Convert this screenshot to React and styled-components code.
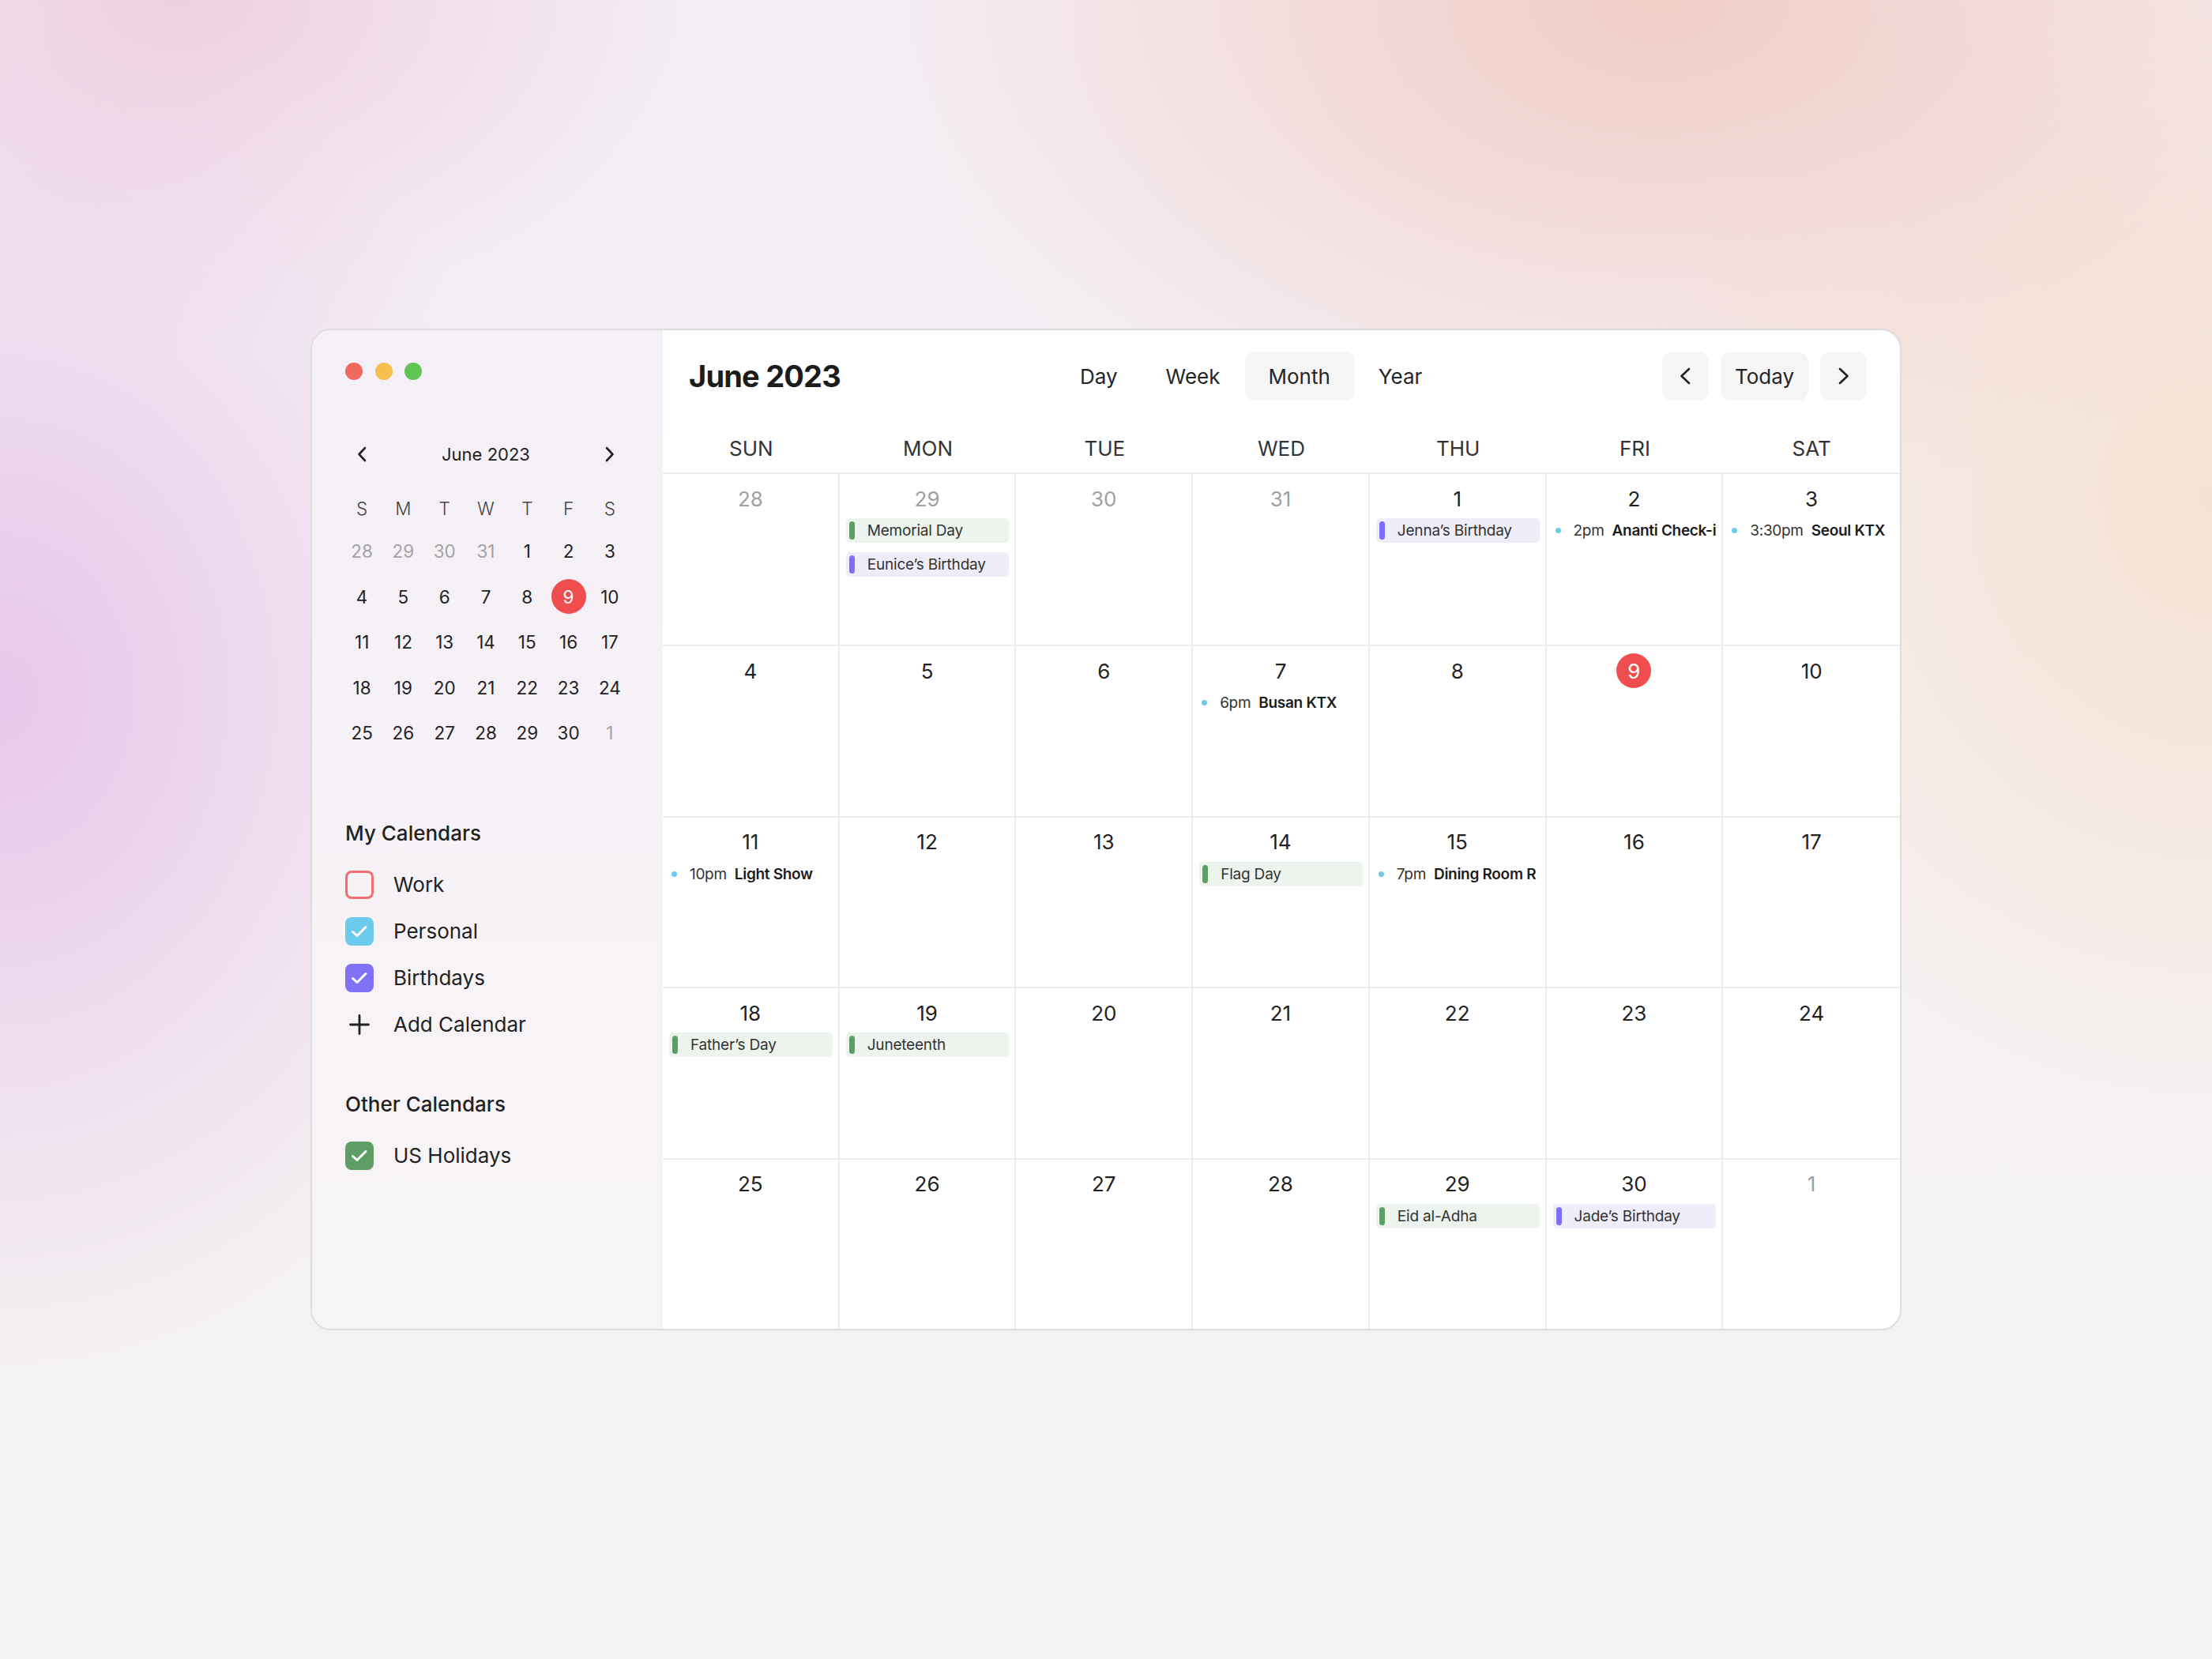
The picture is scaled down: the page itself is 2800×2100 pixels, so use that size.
import React from 'react'
import styled, { createGlobalStyle, css } from 'styled-components'

const GlobalStyle = createGlobalStyle`
  html, body {
    margin: 0;
    padding: 0;
  }
  body {
    font-family: Inter, "Noto Sans", sans-serif;
    color: #222;
    -webkit-font-smoothing: antialiased;
  }
`

const COLORS = {
  line: '#ececec',
  today: '#f04e4e',
  dot: '#6ccbea',
  holiday: { bar: '#5e9e66', bg: '#edf4ee' },
  birthday: { bar: '#7f6ff6', bg: '#efedfa' },
}

// soft pastel backdrop behind the window
const Page = styled.div`
  width: 2800px;
  height: 2100px;
  display: flex;
  align-items: center;
  justify-content: center;
  background:
    radial-gradient(ellipse 1000px 1200px at 0% 42%, rgba(230, 196, 233, 0.95), rgba(230, 196, 233, 0) 72%),
    radial-gradient(ellipse 900px 600px at 8% 0%, rgba(238, 204, 222, 0.9), rgba(238, 204, 222, 0) 75%),
    radial-gradient(ellipse 1400px 900px at 75% 0%, rgba(241, 203, 195, 0.95), rgba(241, 203, 195, 0) 72%),
    radial-gradient(ellipse 1000px 1100px at 100% 30%, rgba(245, 224, 206, 0.95), rgba(245, 224, 206, 0) 72%),
    linear-gradient(180deg, #f4eef5 0%, #f5f1f2 55%, #f4f2f1 100%);
`

const Window = styled.div`
  width: 2014px;
  height: 1268px;
  box-sizing: border-box;
  border: 2px solid #dfdcde;
  border-radius: 26px;
  overflow: hidden;
  display: grid;
  grid-template-columns: 444px 1fr;
  background: #fff;
`

/* ---------- sidebar ---------- */

const Sidebar = styled.aside`
  background: linear-gradient(180deg, #f5eff7 0%, #f6f2f6 55%, #f7f4f5 100%);
  padding: 41px 0 0 42px;
  display: flex;
  flex-direction: column;
`

const TrafficLights = styled.div`
  display: flex;
  gap: 15.5px;
`

const Light = styled.span`
  width: 22px;
  height: 22px;
  border-radius: 50%;
  background: ${p => p.color};
`

const MiniCal = styled.div`
  margin: 72px 0 0 -5px;
  width: 366px;
`

const MiniHeader = styled.div`
  height: 44px;
  display: flex;
  align-items: center;
  justify-content: space-between;
`

const IconButton = styled.span`
  width: 52px;
  height: 44px;
  display: flex;
  align-items: center;
  justify-content: center;
`

const MiniTitle = styled.span`
  font-size: 22px;
  color: #222;
`

const MiniGrid = styled.div`
  margin-top: 20px;
  display: grid;
  grid-template-columns: repeat(7, 1fr);
  grid-template-rows: 52px repeat(5, 57.5px);
`

const MiniCell = styled.span`
  display: flex;
  align-items: center;
  justify-content: center;
  font-size: 22.5px;
  color: ${p => (p.muted ? '#a3a3a3' : p.head ? '#444' : '#222')};
  font-weight: ${p => (p.head ? 300 : 400)};
`

const TodayDot = styled.span`
  width: 44px;
  height: 44px;
  border-radius: 50%;
  background: ${COLORS.today};
  color: #fff;
  display: flex;
  align-items: center;
  justify-content: center;
`

const SectionTitle = styled.div`
  height: 36px;
  line-height: 36px;
  font-size: 26px;
  font-weight: 500;
  color: #222;
  margin-top: ${p => p.mt || '0px'};
  margin-bottom: 24px;
`

const CalList = styled.div`
  display: flex;
  flex-direction: column;
  gap: 13px;
`

const CalRow = styled.div`
  height: 46px;
  display: flex;
  align-items: center;
  gap: 25px;
  font-size: 26px;
  color: #222;
`

const Check = styled.span`
  width: 36px;
  height: 36px;
  box-sizing: border-box;
  border-radius: 8px;
  display: flex;
  align-items: center;
  justify-content: center;
  ${p =>
    p.checked
      ? css`
          background: ${p.color};
        `
      : css`
          border: 3px solid ${p.color};
        `}
`

const PlusSlot = styled.span`
  width: 36px;
  height: 36px;
  display: flex;
  align-items: center;
  justify-content: center;
`

/* ---------- main ---------- */

const Main = styled.section`
  display: flex;
  flex-direction: column;
  min-width: 0;
`

const Header = styled.header`
  padding: 27px 42px 0 33px;
  display: grid;
  grid-template-columns: 465px auto 1fr;
  align-items: center;
  height: 62px;
`

const Title = styled.h1`
  margin: 0;
  font-size: 38px;
  font-weight: 700;
  letter-spacing: -0.8px;
  color: #1c1c1c;
`

const Tabs = styled.nav`
  display: flex;
  gap: 1px;
`

const Tab = styled.span`
  height: 62px;
  padding: 0 30px;
  display: flex;
  align-items: center;
  font-size: 26px;
  color: #252525;
  border-radius: 12px;
  background: ${p => (p.active ? '#f5f5f5' : 'transparent')};
`

const Nav = styled.div`
  justify-self: end;
  display: flex;
  gap: 15px;
`

const NavButton = styled.span`
  height: 61px;
  min-width: 59px;
  box-sizing: border-box;
  padding: 0 ${p => (p.text ? '18px' : '0')};
  display: flex;
  align-items: center;
  justify-content: center;
  border-radius: 12px;
  background: #f5f5f5;
  font-size: 26px;
  color: #252525;
`

const DayNames = styled.div`
  height: 93px;
  box-sizing: border-box;
  display: grid;
  grid-template-columns: repeat(7, 1fr);
  align-items: end;
  padding-bottom: 14px;
  border-bottom: 2px solid ${COLORS.line};
`

const DayName = styled.span`
  text-align: center;
  font-size: 26px;
  line-height: 32px;
  color: #333;
`

const MonthGrid = styled.div`
  flex: 1;
  display: grid;
  grid-template-columns: repeat(7, 1fr);
  grid-template-rows: repeat(5, 1fr);
`

const Cell = styled.div`
  min-width: 0;
  overflow: hidden;
  border-right: 2px solid ${COLORS.line};
  padding-top: 13px;
  display: flex;
  flex-direction: column;
  &:nth-child(7n) {
    border-right: none;
  }
  &:nth-child(n + 8) {
    border-top: 2px solid ${COLORS.line};
  }
`

const DateNum = styled.div`
  height: 36px;
  display: flex;
  align-items: center;
  justify-content: center;
  font-size: 26px;
  color: ${p => (p.muted ? '#a0a0a0' : '#222')};
`

const Events = styled.div`
  margin-top: 7px;
  display: flex;
  flex-direction: column;
  gap: 12px;
`

const Chip = styled.div`
  height: 31px;
  margin: 0 7px 0 8px;
  border-radius: 5px;
  background: ${p => p.kind.bg};
  display: flex;
  align-items: center;
  gap: 16px;
  padding-left: 4px;
  font-size: 19px;
  letter-spacing: -0.2px;
  color: #333;
  white-space: nowrap;
  overflow: hidden;
`

const ChipBar = styled.span`
  flex: none;
  width: 7px;
  height: 23px;
  border-radius: 4px;
  background: ${p => p.kind.bar};
`

const Timed = styled.div`
  height: 31px;
  padding-left: 11px;
  display: flex;
  align-items: center;
  font-size: 19px;
  letter-spacing: -0.3px;
  white-space: nowrap;
`

const Dot = styled.span`
  flex: none;
  width: 7px;
  height: 7px;
  border-radius: 50%;
  background: ${COLORS.dot};
  margin-right: 16px;
`

const Time = styled.span`
  color: #333;
  margin-right: 10px;
`

const EventName = styled.span`
  font-weight: 600;
  color: #1c1c1c;
`

/* ---------- icons ---------- */

const Chevron = ({ dir = 'left', w = 12, h = 20 }) => (
  <svg width={w} height={h} viewBox={`0 0 ${w} ${h}`} fill='none'>
    <path
      d={
        dir === 'left'
          ? `M${w - 2} 2 L2.5 ${h / 2} L${w - 2} ${h - 2}`
          : `M2 2 L${w - 2.5} ${h / 2} L2 ${h - 2}`
      }
      stroke='#222'
      strokeWidth='2.6'
      strokeLinecap='round'
      strokeLinejoin='round'
    />
  </svg>
)

const Tick = () => (
  <svg width='36' height='36' viewBox='0 0 36 36' fill='none'>
    <path d='M9.5 18.5 L15 23.5 L26 12.5' stroke='#fff' strokeWidth='3' strokeLinecap='round' strokeLinejoin='round' />
  </svg>
)

const Plus = () => (
  <svg width='26' height='26' viewBox='0 0 26 26' fill='none'>
    <path d='M13 1.5 V24.5 M1.5 13 H24.5' stroke='#222' strokeWidth='2.8' strokeLinecap='round' />
  </svg>
)

/* ---------- data ---------- */

const miniWeeks = [
  [[28, 1], [29, 1], [30, 1], [31, 1], [1], [2], [3]],
  [[4], [5], [6], [7], [8], [9, 0, 1], [10]],
  [[11], [12], [13], [14], [15], [16], [17]],
  [[18], [19], [20], [21], [22], [23], [24]],
  [[25], [26], [27], [28], [29], [30], [1, 1]],
]

const H = COLORS.holiday
const B = COLORS.birthday

// long event titles are shown as the cell cuts them in the design
const days = [
  { n: 28, muted: true },
  { n: 29, muted: true, events: [{ kind: H, name: 'Memorial Day' }, { kind: B, name: 'Eunice’s Birthday' }] },
  { n: 30, muted: true },
  { n: 31, muted: true },
  { n: 1, events: [{ kind: B, name: 'Jenna’s Birthday' }] },
  { n: 2, events: [{ time: '2pm', name: 'Ananti Check-i' }] },
  { n: 3, events: [{ time: '3:30pm', name: 'Seoul KTX' }] },
  { n: 4 },
  { n: 5 },
  { n: 6 },
  { n: 7, events: [{ time: '6pm', name: 'Busan KTX' }] },
  { n: 8 },
  { n: 9, today: true },
  { n: 10 },
  { n: 11, events: [{ time: '10pm', name: 'Light Show' }] },
  { n: 12 },
  { n: 13 },
  { n: 14, events: [{ kind: H, name: 'Flag Day' }] },
  { n: 15, events: [{ time: '7pm', name: 'Dining Room R' }] },
  { n: 16 },
  { n: 17 },
  { n: 18, events: [{ kind: H, name: 'Father’s Day' }] },
  { n: 19, events: [{ kind: H, name: 'Juneteenth' }] },
  { n: 20 },
  { n: 21 },
  { n: 22 },
  { n: 23 },
  { n: 24 },
  { n: 25 },
  { n: 26 },
  { n: 27 },
  { n: 28 },
  { n: 29, events: [{ kind: H, name: 'Eid al-Adha' }] },
  { n: 30, events: [{ kind: B, name: 'Jade’s Birthday' }] },
  { n: 1, muted: true },
]

const myCalendars = [
  { name: 'Work', color: '#f46c70', checked: false },
  { name: 'Personal', color: '#6ccbea', checked: true },
  { name: 'Birthdays', color: '#8271f5', checked: true },
]

const Event = ({ ev }) =>
  ev.time ? (
    <Timed>
      <Dot />
      <Time>{ev.time}</Time>
      <EventName>{ev.name}</EventName>
    </Timed>
  ) : (
    <Chip kind={ev.kind}>
      <ChipBar kind={ev.kind} />
      {ev.name}
    </Chip>
  )

export default function App() {
  return (
    <>
      <GlobalStyle />
      <Page>
        <Window>
          <Sidebar>
            <TrafficLights>
              <Light color='#ee6a5f' />
              <Light color='#f5be4f' />
              <Light color='#61c554' />
            </TrafficLights>

            <MiniCal>
              <MiniHeader>
                <IconButton><Chevron dir='left' /></IconButton>
                <MiniTitle>June 2023</MiniTitle>
                <IconButton><Chevron dir='right' /></IconButton>
              </MiniHeader>
              <MiniGrid>
                {['S', 'M', 'T', 'W', 'T', 'F', 'S'].map((d, i) => (
                  <MiniCell key={'h' + i} head>{d}</MiniCell>
                ))}
                {miniWeeks.flat().map(([n, muted, today], i) => (
                  <MiniCell key={i} muted={!!muted}>
                    {today ? <TodayDot>{n}</TodayDot> : n}
                  </MiniCell>
                ))}
              </MiniGrid>
            </MiniCal>

            <SectionTitle mt='80px'>My Calendars</SectionTitle>
            <CalList>
              {myCalendars.map(c => (
                <CalRow key={c.name}>
                  <Check color={c.color} checked={c.checked}>{c.checked && <Tick />}</Check>
                  {c.name}
                </CalRow>
              ))}
              <CalRow>
                <PlusSlot><Plus /></PlusSlot>
                Add Calendar
              </CalRow>
            </CalList>

            <SectionTitle mt='60px'>Other Calendars</SectionTitle>
            <CalList>
              <CalRow>
                <Check color='#5e9e66' checked><Tick /></Check>
                US Holidays
              </CalRow>
            </CalList>
          </Sidebar>

          <Main>
            <Header>
              <Title>June 2023</Title>
              <Tabs>
                <Tab>Day</Tab>
                <Tab>Week</Tab>
                <Tab active>Month</Tab>
                <Tab>Year</Tab>
              </Tabs>
              <Nav>
                <NavButton><Chevron dir='left' w={14} h={22} /></NavButton>
                <NavButton text>Today</NavButton>
                <NavButton><Chevron dir='right' w={14} h={22} /></NavButton>
              </Nav>
            </Header>

            <DayNames>
              {['SUN', 'MON', 'TUE', 'WED', 'THU', 'FRI', 'SAT'].map(d => (
                <DayName key={d}>{d}</DayName>
              ))}
            </DayNames>

            <MonthGrid>
              {days.map((d, i) => (
                <Cell key={i}>
                  <DateNum muted={d.muted}>
                    {d.today ? <TodayDot>{d.n}</TodayDot> : d.n}
                  </DateNum>
                  {d.events && (
                    <Events>
                      {d.events.map((ev, j) => (
                        <Event key={j} ev={ev} />
                      ))}
                    </Events>
                  )}
                </Cell>
              ))}
            </MonthGrid>
          </Main>
        </Window>
      </Page>
    </>
  )
}
